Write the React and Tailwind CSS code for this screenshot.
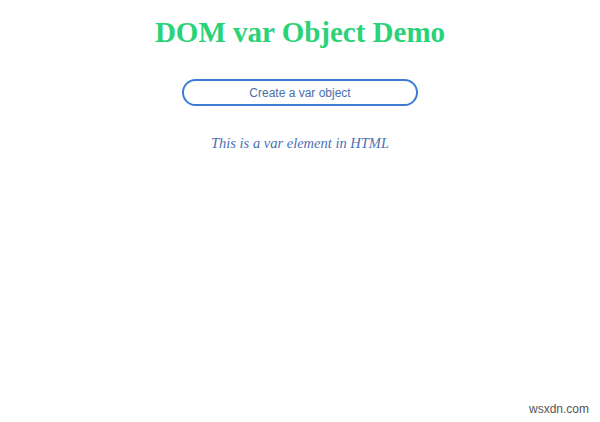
export default function App() {
  return (
    <div className="relative w-[600px] h-[422px] bg-white overflow-hidden">
      <div className="flex flex-col items-center">
        <h1 className="mt-[16px] text-[29px] leading-[33px] font-bold text-[#2bd277] font-['Liberation_Serif',serif]">
          DOM var Object Demo
        </h1>
        <button className="mt-[30px] w-[236px] h-[27px] rounded-full border-2 border-[#3d7bd4] bg-white text-[12px] text-[#4a6ea8] font-['Liberation_Sans',sans-serif]">
          Create a var object
        </button>
        <p className="mt-[28px] text-[14.5px] leading-[18px] italic text-[#4b70b5] font-['Liberation_Serif',serif]">
          This is a var element in HTML
        </p>
      </div>
      <div className="absolute right-[11px] bottom-[4px] text-[12px] text-[#555] font-['Liberation_Sans',sans-serif]">
        wsxdn.com
      </div>
    </div>
  );
}
